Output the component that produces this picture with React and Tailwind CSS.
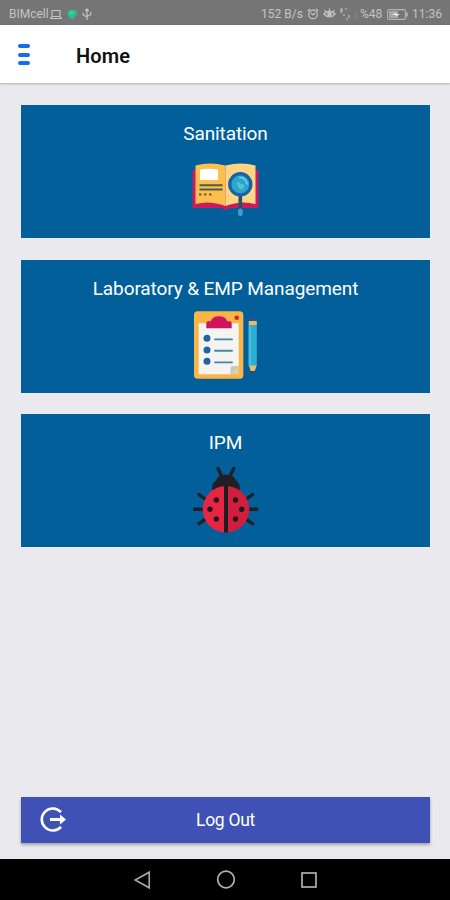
import React from 'react';

const BookIcon = () => (
  <svg width="67" height="68" viewBox="0 0 67 68" fill="none">
    <path d="M0.5 14H66.5V52H40Q36 52 33.5 54Q31 52 27 52H0.5Z" fill="#c91c5c" />
    <path d="M3.5 9.5Q18 5.5 33.5 9.5V50Q18 44 3.5 48Z" fill="#fdc04f" />
    <path d="M33.5 9.5Q49 5.5 63.5 9.5V48Q49 44 33.5 50Z" fill="#fdd585" />
    <path d="M8 13.5Q17 12 26 13.5V24H8Z" fill="#fff" />
    <path d="M7.5 29.3H30.5M7.5 33.6H30.5" stroke="#4d5a4a" strokeWidth="2" />
    <path d="M7 38.5H9.5M12 38.5H14.5M17 38.5H19.5" stroke="#6b5a35" strokeWidth="1.8" />
    <path d="M48.3 39V53" stroke="#23506b" strokeWidth="3.6" />
    <rect x="46" y="52.5" width="4.8" height="7.5" rx="2.2" fill="#3c9fc8" />
    <circle cx="48.3" cy="28.3" r="10.6" fill="#2ea3cb" stroke="#1763a5" strokeWidth="3.2" />
    <path d="M47 21.5Q54 21 55 28.5" stroke="#6bd3df" strokeWidth="1.8" />
    <path d="M44.5 26.5Q47 25 49 28L52.5 29L51 33.5Q46 34 44.5 26.5Z" fill="#50c2d2" />
  </svg>
);

const ClipboardIcon = () => (
  <svg width="67" height="68" viewBox="0 0 67 68" fill="none">
    <rect x="2" y="0.3" width="49.3" height="67.5" rx="3.5" fill="#fbb545" />
    <path d="M6.7 12.3H46.7V55L38.5 63.3H6.7Z" fill="#f4f5f3" />
    <path d="M38.5 63.3V57Q38.5 55 40.5 55H46.7L38.5 63.3Z" fill="#c9c7bf" />
    <path d="M46.7 55L38.5 63.3H46.7Z" fill="#e0d0a6" />
    <path d="M14.3 17.3V12.3Q14.3 10.3 16.3 10.3H18.8Q20.5 5.3 27 5.3Q33.5 5.3 35.2 10.3H37.7Q39.7 10.3 39.7 12.3V17.3Z" fill="#cf145d" />
    <circle cx="44.7" cy="6.7" r="2.3" fill="#c92936" />
    <g fill="#2064a0">
      <circle cx="15" cy="27.3" r="3.5" />
      <circle cx="15" cy="39" r="3.5" />
      <circle cx="15" cy="50.3" r="3.5" />
    </g>
    <path d="M23 28.4H40M23 39.8H40M23 51.4H40" stroke="#4a82a8" strokeWidth="1.9" strokeLinecap="round" />
    <path d="M56.7 10V7.5Q56.7 5 59 5H62.5Q64.8 5 64.8 7.5V10Z" fill="#1c5795" />
    <path d="M56.7 10H64.8V14.5H56.7ZM56.7 54H64.8L62.8 60H58.7Z" fill="#e5bd6c" />
    <path d="M56.7 14.3H64.8V54.5H56.7Z" fill="#2caed2" />
    <path d="M56.7 14.3H59V54.5H56.7Z" fill="#47bedb" />
    <path d="M58.7 60H62.8L60.8 65Z" fill="#364b5c" />
  </svg>
);

const LadybugIcon = () => (
  <svg width="67" height="68" viewBox="0 0 67 68" fill="none">
    <g stroke="#1c2027" strokeWidth="3.4" strokeLinecap="round">
      <path d="M30 12L26 3.5M37.7 12L41.7 3.5" />
      <path d="M13 34L7 29.5M11 44.3H2.5M13 54.5L7 58.7" />
      <path d="M54.5 34L60.5 29.5M56.5 44.3H65M54.5 54.5L60.5 58.7" />
    </g>
    <path d="M20.3 25V21Q21 17 24 15.5Q26 9.5 34 9.5Q42 9.5 44 15.5Q47 17 47.7 21V25Z" fill="#211f24" />
    <path d="M34 21A23.3 23.3 0 0 0 34 67.6Z" fill="#e52542" />
    <path d="M34 21A23.3 23.3 0 0 1 34 67.6Z" fill="#d01f3d" />
    <path d="M34 20.5V67.5" stroke="#211c22" strokeWidth="4" />
    <g fill="#29161d">
      <circle cx="24.3" cy="35" r="2.7" />
      <circle cx="18" cy="44.3" r="2.7" />
      <circle cx="24.3" cy="54" r="2.7" />
      <circle cx="43.5" cy="35" r="2.7" />
      <circle cx="49.7" cy="44.3" r="2.7" />
      <circle cx="43.5" cy="54" r="2.7" />
    </g>
  </svg>
);

const StatusBar = () => (
  <div className="flex h-[25px] items-center bg-[#757575] pl-[9px] pr-2 pt-[3px] text-[12px] leading-none text-[#c4c4c4]">
    <span className="w-[41px] whitespace-nowrap text-[12px]">BIMcell</span>
    <svg width="12" height="11" viewBox="0 0 12 11" fill="none" stroke="currentColor" strokeWidth="1.1">
      <path d="M2 7.5V1.5H10V7.5M0.5 9.5H11.5L10 7.5H2Z" />
    </svg>
    <svg className="ml-[5px]" width="11" height="11" viewBox="0 0 11 11">
      <path d="M1 2.5Q5 0 9 1.5L10.3 5L6.5 9.8H4L1 6.5Z" fill="#26bfa1" />
      <path d="M2 3Q4 0.5 7 2L6 5L3 6Z" fill="#35d57c" />
      <path d="M6.5 6L10 4.5L7.5 9Z" fill="#5b9992" />
    </svg>
    <svg className="ml-[4px]" width="10" height="13" viewBox="0 0 10 13" fill="none" stroke="currentColor" strokeWidth="1.2">
      <path d="M5 12V1M3.3 3L5 1L6.7 3M1.2 4.5V7L5 9M8.8 4V6.5L5 8.5" />
    </svg>
    <span className="ml-auto w-[43px] whitespace-nowrap">152 B/s</span>
    <svg className="ml-[3px]" width="12" height="12" viewBox="0 0 12 12" fill="none" stroke="currentColor" strokeWidth="1.2">
      <circle cx="6" cy="6.5" r="4.3" />
      <path d="M0.8 3L3 1M11.2 3L9 1M4 5L6 7L8 5" />
    </svg>
    <svg className="ml-1" width="13" height="12" viewBox="0 0 13 12" fill="none" stroke="currentColor" strokeWidth="1.2">
      <path d="M0.8 6Q6.5 0.5 12.2 6Q6.5 12 0.8 6ZM6.5 3V0.5M3 4L1.5 2M10 4L11.5 2" />
      <circle cx="6.5" cy="6.3" r="1.8" fill="currentColor" />
    </svg>
    <svg className="ml-1" width="19" height="12" viewBox="0 0 19 12" fill="none" stroke="currentColor" strokeWidth="1.1">
      <path d="M1 5V1H3M5 1H7M1 3H3M4 8V6M6 11H8M9 10V7" />
      <path d="M12 11V9M14.5 11V6M17 11V3" stroke="#858585" />
    </svg>
    <span className="ml-[1px] w-[24px] whitespace-nowrap">%48</span>
    <svg className="ml-[3px]" width="21" height="11" viewBox="0 0 21 11" fill="none">
      <rect x="0.6" y="0.6" width="17.8" height="9.8" rx="1.5" stroke="#b5b5b5" strokeWidth="1.1" />
      <rect x="2" y="2" width="9" height="7" fill="#a7a7a7" />
      <path d="M5 5.5L9 3.5V5H13L9 7.5V6Z" fill="#eee" />
      <path d="M20 3.5V7.5" stroke="#c4c4c4" strokeWidth="1.3" />
    </svg>
    <span className="ml-[4px] w-[30px] whitespace-nowrap">11:36</span>
  </div>
);

const Header = () => (
  <div className="relative flex h-[58px] items-center bg-white pl-[18px] shadow-[0_1px_2px_rgba(0,0,0,0.25)]">
    <div className="mt-[1px] flex w-3 flex-col gap-[4.3px]">
      <span className="h-1 rounded-full bg-[#1a6fe8]" />
      <span className="h-1 rounded-full bg-[#1a6fe8]" />
      <span className="h-1 rounded-full bg-[#1a6fe8]" />
    </div>
    <h1 className="ml-[46px] mt-[3px] text-[20px] font-semibold leading-6 tracking-[0.1px] text-[#111]">Home</h1>
  </div>
);

const menuItems = [
  { title: 'Sanitation', Icon: BookIcon },
  { title: 'Laboratory & EMP Management', Icon: ClipboardIcon },
  { title: 'IPM', Icon: LadybugIcon },
];

const MenuCard = ({ title, Icon }) => (
  <button className="flex h-[133px] w-full flex-col items-center bg-[#035f9a] pt-[17px] text-white">
    <span className="mb-[10px] text-[19px] leading-6 tracking-[-0.1px]">{title}</span>
    <Icon />
  </button>
);

const LogoutButton = () => (
  <button className="mt-auto flex h-[46px] w-full items-center bg-[#3f51b5] pl-[19px] text-white shadow-[0_2px_3px_rgba(0,0,0,0.3)]">
    <svg width="26" height="26" viewBox="0 0 26 26" fill="none">
      <path d="M21 5.2A11 11 0 1 0 21 19.8" stroke="#fff" strokeWidth="2.6" />
      <path d="M10 12.5H21" stroke="#fff" strokeWidth="3" />
      <path d="M20 7.5L26 12.5L20 17.5Z" fill="#fff" />
    </svg>
    <span className="flex-1 pr-[45px] text-center text-[17.5px] leading-6 tracking-[-0.3px]">Log Out</span>
  </button>
);

const NavBar = () => (
  <div className="flex h-[41px] items-center justify-center gap-[63px] bg-black pl-[1px]">
    <svg width="20" height="20" viewBox="0 0 20 20" fill="none" stroke="#a8a8a8" strokeWidth="1.6">
      <path d="M16.2 2.2V17.8L2.2 10Z" />
    </svg>
    <svg width="20" height="20" viewBox="0 0 20 20" fill="none" stroke="#b0b0b0" strokeWidth="1.7">
      <circle cx="10" cy="9.5" r="8.3" />
    </svg>
    <svg width="20" height="20" viewBox="0 0 20 20" fill="none" stroke="#b0b0b0" strokeWidth="1.7">
      <rect x="3" y="3" width="14" height="14" />
    </svg>
  </div>
);

export default function App() {
  return (
    <div className="flex h-[900px] w-[450px] flex-col overflow-hidden bg-[#e9e9ee] font-['Roboto',sans-serif]">
      <StatusBar />
      <Header />
      <main className="flex flex-1 flex-col pb-4 pl-[21px] pr-5 pt-[22px]">
        <div className="flex flex-col gap-[21.5px]">
          {menuItems.map((item) => (
            <MenuCard key={item.title} {...item} />
          ))}
        </div>
        <LogoutButton />
      </main>
      <NavBar />
    </div>
  );
}
